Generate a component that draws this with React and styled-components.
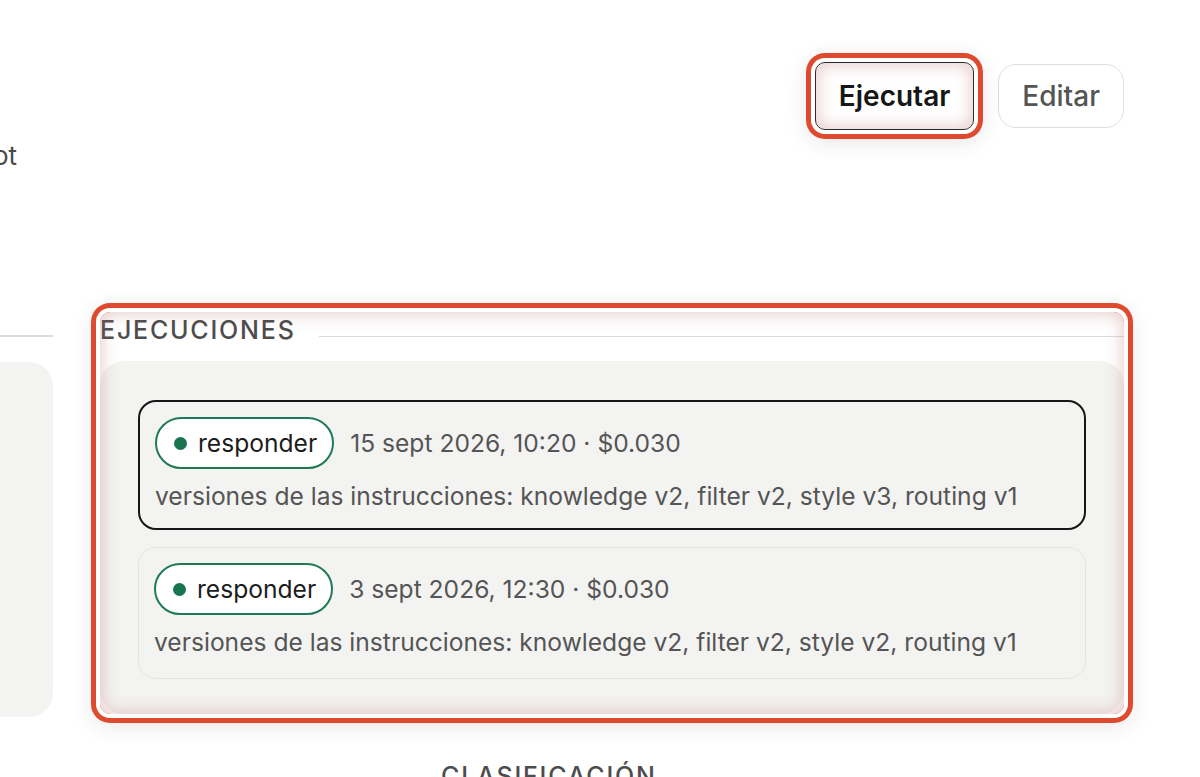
import React from "react";
import styled, { createGlobalStyle, css } from "styled-components";

const GlobalStyle = createGlobalStyle`
  html, body {
    margin: 0;
    padding: 0;
    background: #ffffff;
  }
  body {
    font-family: Inter, "Noto Sans", "Liberation Sans", sans-serif;
    color: #1f1f1f;
    overflow: hidden;
  }
  * { box-sizing: border-box; }
`;

/* Focus ring: white gap, red ring, soft outer shadow and a rosy inner glow */
const focusRing = css`
  position: relative;
  box-shadow: 0 0 0 4px #ffffff, 0 0 0 9px #de4a2e, 0 4px 22px 8px rgba(0, 0, 0, 0.1);
  &::after {
    content: "";
    position: absolute;
    inset: 0;
    border-radius: inherit;
    pointer-events: none;
    box-shadow: inset 0 0 16px 2px rgba(185, 95, 95, 0.32);
  }
`;

const Page = styled.div`
  width: 1200px;
  height: 777px;
  overflow: hidden;
  display: flex;
  flex-direction: column;
`;

const Header = styled.header`
  display: flex;
  justify-content: space-between;
  align-items: flex-start;
  padding: 62px 76px 0 0;
`;

const Subtitle = styled.div`
  width: 17px;
  margin-top: 78px;
  display: flex;
  justify-content: flex-end;
  white-space: nowrap;
  font-size: 26px;
  line-height: 32px;
  color: #4a4a4a;
`;

const Actions = styled.div`
  display: flex;
  align-items: center;
  gap: 24px;
`;

const Button = styled.button`
  font-family: inherit;
  font-size: 28px;
  line-height: 1;
  height: ${(p) => (p.$primary ? "68px" : "64px")};
  padding: 0 23px;
  border-radius: ${(p) => (p.$primary ? "10px" : "18px")};
  background: #ffffff;
  cursor: pointer;
  ${(p) =>
    p.$primary
      ? css`
          font-weight: 600;
          color: #161616;
          border: 1.5px solid #2b2b2b;
          ${focusRing}
        `
      : css`
          font-weight: 500;
          color: #555555;
          border: 1.5px solid #dedede;
        `}
`;

const Columns = styled.div`
  display: grid;
  grid-template-columns: 53px 1024px;
  column-gap: 47px;
  margin-top: 140px;
`;

const SideColumn = styled.div`
  display: flex;
  flex-direction: column;
  margin-left: -200px;
  padding-top: 23px;
`;

const Rule = styled.div`
  flex: ${(p) => (p.$grow ? "1 1 auto" : "0 0 auto")};
  height: 1.5px;
  background: #dcdcda;
`;

const SidePanel = styled.div`
  flex: 1;
  margin-top: 25px;
  margin-bottom: -3px;
  border-radius: 24px;
  background: #f3f3f1;
`;

const Section = styled.section`
  display: flex;
  flex-direction: column;
  border-radius: 10px;
  ${focusRing}
`;

const SectionHead = styled.div`
  display: flex;
  align-items: flex-end;
  gap: 23px;
  height: 32px;
  margin-bottom: 17px;
  & > ${Rule} {
    margin-bottom: 7px;
  }
`;

const headingText = css`
  margin: 0;
  font-size: 25px;
  line-height: 28px;
  font-weight: 500;
  letter-spacing: 1.8px;
  color: #4d4d4d;
  text-transform: uppercase;
`;

const SectionTitle = styled.h2`
  ${headingText}
`;

const Panel = styled.div`
  display: flex;
  flex-direction: column;
  gap: 17px;
  padding: 39px 38px 35px;
  border-radius: 24px;
  background: #f3f3f1;
`;

const RunCard = styled.article`
  display: flex;
  flex-direction: column;
  gap: 12px;
  min-height: ${(p) => (p.$selected ? "129px" : "132px")};
  padding: 15px 15px 17px;
  border-radius: 18px;
  background: #f3f3f1;
  border: ${(p) => (p.$selected ? "2px solid #161616" : "1.5px solid #e4e4e1")};
`;

const RunMeta = styled.div`
  display: flex;
  align-items: center;
  gap: 16px;
`;

const StatusPill = styled.span`
  display: inline-flex;
  align-items: center;
  gap: 11px;
  height: 52px;
  padding: 0 15px 0 17px;
  border-radius: 26px;
  border: 2px solid #1f7a57;
  background: #ffffff;
  font-size: 24.6px;
  color: #1c1c1c;
`;

const Dot = styled.span`
  width: 13px;
  height: 13px;
  border-radius: 50%;
  background: #18754f;
`;

const MetaText = styled.span`
  font-size: 24.6px;
  color: #555555;
`;

const Versions = styled.div`
  font-size: 24.6px;
  line-height: 30px;
  color: #555555;
`;

const NextHead = styled.h2`
  ${headingText}
  margin-top: 48px;
  padding-left: 441px;
`;

const runs = [
  {
    id: 1,
    when: "15 sept 2026, 10:20",
    cost: "$0.030",
    versions: "knowledge v2, filter v2, style v3, routing v1",
    selected: true,
  },
  {
    id: 2,
    when: "3 sept 2026, 12:30",
    cost: "$0.030",
    versions: "knowledge v2, filter v2, style v2, routing v1",
    selected: false,
  },
];

export default function App() {
  return (
    <>
      <GlobalStyle />
      <Page>
        <Header>
          <Subtitle>Flujo de respuesta del chatbot</Subtitle>
          <Actions>
            <Button $primary>Ejecutar</Button>
            <Button>Editar</Button>
          </Actions>
        </Header>

        <Columns>
          <SideColumn>
            <Rule />
            <SidePanel />
          </SideColumn>

          <Section>
            <SectionHead>
              <SectionTitle>Ejecuciones</SectionTitle>
              <Rule $grow />
            </SectionHead>
            <Panel>
              {runs.map((run) => (
                <RunCard key={run.id} $selected={run.selected}>
                  <RunMeta>
                    <StatusPill>
                      <Dot />
                      responder
                    </StatusPill>
                    <MetaText>
                      {run.when} · {run.cost}
                    </MetaText>
                  </RunMeta>
                  <Versions>versiones de las instrucciones: {run.versions}</Versions>
                </RunCard>
              ))}
            </Panel>
          </Section>
        </Columns>

        <NextHead>Clasificación</NextHead>
      </Page>
    </>
  );
}
